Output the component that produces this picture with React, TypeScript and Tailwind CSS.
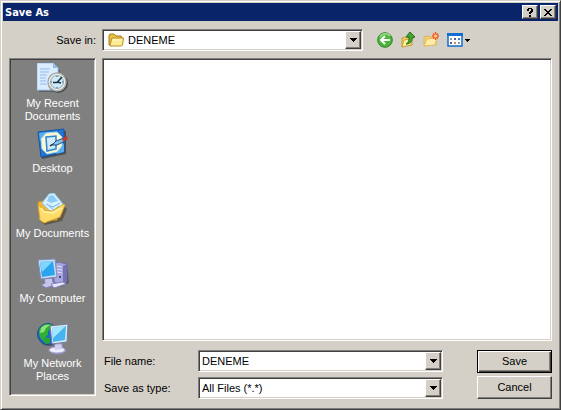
import { useState } from "react";
import type { ReactNode } from "react";

const sunken =
  "border border-t-[#808080] border-l-[#808080] border-r-white border-b-white shadow-[inset_1px_1px_0_#404040,inset_-1px_-1px_0_#d4d0c8]";
const raised =
  "border border-t-white border-l-white border-r-[#404040] border-b-[#404040] bg-[#d4d0c8] shadow-[inset_-1px_-1px_0_#808080]";

const RecentIcon = () => (
  <svg viewBox="0 0 32 32" className="h-8 w-8" aria-hidden="true">
    <path d="M2 2h16l5 5v22H2z" fill="#5b6068" />
    <path d="M0 0h16l5 5v22H0z" fill="#dcecff" stroke="#a9c8f0" />
    <path d="M16 0v5h5z" fill="#8fb8ee" />
    <path d="M3 6h10M3 9h9M3 12h7M3 15h6M3 18h6M3 21h7" stroke="#8db9ee" />
    <circle cx="21" cy="20" r="10" fill="#44484f" />
    <circle cx="20" cy="19" r="9" fill="#eef0ea" stroke="#a9aca8" strokeWidth="1.500" />
    <circle cx="20" cy="19" r="6.500" fill="#cfe9f7" stroke="#8aa3b5" />
    <path d="M20 13v1M20 24v1M14 19h1M25 19h1" stroke="#44647a" />
    <path d="M25 14l-5 5.500h-4M20 19l4 1" fill="none" stroke="#17303c" strokeWidth="1.500" />
  </svg>
);

const DesktopIcon = () => (
  <svg viewBox="0 0 32 32" className="h-8 w-8" aria-hidden="true">
    <path d="M3 5l26-2 0 23-24 5z" fill="#4a4e57" />
    <path d="M1 4l26-3v23L4 29z" fill="#2477d2" stroke="#1257ab" />
    <path d="M2 5l7-1-6 9zM27 15v9l-8 2z" fill="#58aef0" />
    <path d="M9 5l11-1 5 5v9l-5 6-10 2-5-5-1-10z" fill="#fbf8d4" stroke="#a5d8ee" />
    <path d="M9 9l10-1v13l-9 2z" fill="#cfeafa" stroke="#2d83cd" strokeWidth="1.500" />
    <path d="M15 17l4-4 8-3 1 3-8 4z" fill="#8bc2ea" stroke="#214f84" />
    <path d="M25 11l4-3 2 1-1 3-4 1z" fill="#c5392f" />
    <path d="M13 18l3-2" stroke="#152b4b" strokeWidth="1.500" />
  </svg>
);

const DocumentsIcon = () => (
  <svg viewBox="0 0 32 32" className="h-8 w-8" aria-hidden="true">
    <path d="M3 12l4-1 4 3 16-1 3 3-5 12-17 4-5-4z" fill="#61584a" />
    <path d="M1 9l5-1 2 3 12 1v15L3 27z" fill="#eeb83e" stroke="#c99325" />
    <path d="M5 10l7-9 5-1 9 11-10 10z" fill="#d9f1ff" stroke="#8bc6ea" />
    <path d="M12 3l4-1 5 6-7 2-4-2z" fill="#8ccbf2" />
    <path d="M9 11l7 3 7-4M12 13l5 4 5-4" fill="none" stroke="#74b7e5" />
    <path d="M1 11l5 6 9 1 12-7 1 1-5 12-16 6-4-3z" fill="#ffdc68" stroke="#dba730" />
    <path d="M4 15l3 4 9 1 9-5" fill="none" stroke="#fff2a9" strokeWidth="1.500" />
  </svg>
);

const ComputerIcon = () => (
  <svg viewBox="0 0 32 32" className="h-8 w-8" aria-hidden="true">
    <path d="M19 6l11-1 2 20-8 4-5-2z" fill="#5c5e72" />
    <path d="M17 6l4-2 9 2-1 18-6 3-6-3z" fill="#a6a5dc" stroke="#7673b0" />
    <path d="M26 8l4-2v17l-4 3z" fill="#7371b3" />
    <path d="M20 8l5 1M20 11l5 1M20 14l5 1" stroke="#e2e2ff" />
    <path d="M22 19h2" stroke="#48468f" strokeWidth="2" />
    <path d="M7 21l8-1 1 4 2 3-9 3-5-3 4-2z" fill="#c5c5ea" stroke="#7f7db8" />
    <path d="M1 2l17-1 2 18-16 2z" fill="#cddcf3" stroke="#7b91bc" />
    <path d="M3 4l13-1 2 14-13 2z" fill="#2aa4ee" />
    <path d="M3 4l13-1L5 14z" fill="#7fd6ff" />
    <path d="M14 26l12-2 3 2-12 4z" fill="#e6e6fb" stroke="#8684bb" />
  </svg>
);

const NetworkIcon = () => (
  <svg viewBox="0 0 32 32" className="h-8 w-8" aria-hidden="true">
    <circle cx="12" cy="12" r="11" fill="#53565e" />
    <circle cx="11" cy="11" r="10.500" fill="#1f65cc" stroke="#1b4b98" />
    <path d="M2 7c3-6 9-7 14-5l-2 4-3 2v4l-3 2-1 4-3-2-2-5z" fill="#2fae38" />
    <path d="M4 5c2-3 6-4 9-3L9 5 7 9 3 10z" fill="#8be574" />
    <path d="M8 14l5 1v5l-4 1-3-3z" fill="#24a536" />
    <path d="M18 20h7l1 6-9 1z" fill="#bcbbe0" stroke="#8583b9" />
    <path d="M13 3l18-2-1 18-15 2z" fill="#dce8f4" stroke="#717d98" />
    <path d="M15 5l14-2-1 14-12 2z" fill="#46b4f0" />
    <path d="M15 5l14-2-13 12z" fill="#a3e6ff" />
    <ellipse cx="21" cy="28" rx="8" ry="3.500" fill="#8c8ab8" />
    <ellipse cx="20" cy="27" rx="8" ry="3" fill="#eeeeff" stroke="#a9a8d0" />
    <path d="M18 22h6l1 4-7 1z" fill="#cfcef0" />
  </svg>
);

const FolderIcon = () => (
  <svg viewBox="0 0 16 14" className="h-[14px] w-4" aria-hidden="true">
    <path d="M1 12V3l1-2h4l2 2h5l1 2v7z" fill="#e9c242" stroke="#a27a1c" />
    <path d="M2 12l2-7h11.500l-1 7-1 1H2z" fill="#ffed94" stroke="#b88e29" />
    <path d="M5 7h8" stroke="#fff9cd" />
  </svg>
);

const BackIcon = () => (
  <svg viewBox="0 0 16 16" className="h-4 w-4" aria-hidden="true">
    <circle cx="8" cy="8" r="7.300" fill="#4cb53a" stroke="#2b8423" />
    <path d="M3 5c2-4 8-4 10-1" fill="none" stroke="#92d67e" strokeWidth="2" />
    <path d="M13 8H4M8 4L4 8l4 4" fill="none" stroke="white" strokeWidth="2" />
  </svg>
);

const UpIcon = () => (
  <svg viewBox="0 0 16 16" className="h-4 w-4" aria-hidden="true">
    <path d="M2 6l4-1 1 1 5-1v8l-10 2z" fill="#f2d364" stroke="#c29a2f" />
    <path d="M2 15l2-7 9-2-2 7z" fill="#fff0a0" stroke="#cda53a" />
    <path d="M6 12c3-2 3-4 3-7H6l4-5 5 5-3 1c0 4-2 6-6 6z" fill="#42a632" stroke="#236f20" />
  </svg>
);

const NewFolderIcon = () => (
  <svg viewBox="0 0 16 16" className="h-4 w-4" aria-hidden="true">
    <path d="M1 14V5l4-1 2 1h6v8z" fill="#f4cf74" stroke="#dcb45a" />
    <path d="M1 14l3-7 10-1-2 7z" fill="#ffeda5" stroke="#e3bd63" />
    <path d="M12.500 0v8M9 4h7M10 1.500l5 5M15 1.500l-5 5" stroke="#f05d2d" strokeWidth="1.500" />
    <circle cx="12.500" cy="4" r="1.500" fill="#ffd092" />
  </svg>
);

const ViewIcon = () => (
  <svg viewBox="0 0 16 14" className="h-[14px] w-4" aria-hidden="true">
    <path d="M1 1h14v12H1z" fill="white" stroke="#126dcc" strokeWidth="1.500" />
    <path d="M0 0h16v3H0z" fill="#146ed1" />
    <path d="M3 5h2v2H3zM11 9h2v2h-2z" fill="#8c9dab" />
    <path d="M7 5h2v2H7zM3 9h2v2H3z" fill="#555f9a" />
    <path d="M11 5h2v2h-2z" fill="#3585d3" />
    <path d="M7 9h2v2H7z" fill="#db8054" />
  </svg>
);

const Arrow = () => (
  <svg viewBox="0 0 7 4" className="h-1 w-[7px]" shapeRendering="crispEdges" aria-hidden="true">
    <path d="M0 0h7L3.500 4z" fill="black" />
  </svg>
);

const ArrowBox = () => (
  <span
    className={`pointer-events-none absolute inset-y-0.5 right-0.5 flex w-4 items-center justify-center ${raised}`}
  >
    <Arrow />
  </span>
);

const places: { label: string; icon: ReactNode }[] = [
  { label: "My Recent Documents", icon: <RecentIcon /> },
  { label: "Desktop", icon: <DesktopIcon /> },
  { label: "My Documents", icon: <DocumentsIcon /> },
  { label: "My Computer", icon: <ComputerIcon /> },
  { label: "My Network Places", icon: <NetworkIcon /> },
];

const tools = [
  { label: "Back", icon: <BackIcon /> },
  { label: "Up one level", icon: <UpIcon /> },
  { label: "Create new folder", icon: <NewFolderIcon /> },
];

const App = () => {
  const [fileName, setFileName] = useState("DENEME");

  return (
    <main className="flex min-h-screen flex-col border border-t-[#d4d0c8] border-r-[#404040] border-b-[#404040] border-l-[#d4d0c8] bg-[#d4d0c8] p-0.5 font-['Liberation_Sans',Arial,sans-serif] text-[11px] leading-[13px] text-black shadow-[inset_1px_1px_0_white,inset_-1px_-1px_0_#808080]">
      <header className="flex h-[18px] items-center bg-[#0a246a] px-0.5">
        <h1 className="flex-1 font-['DejaVu_Sans_Condensed','DejaVu_Sans',sans-serif] font-bold text-white">
          Save As
        </h1>
        <div className="flex gap-0.5">
          <button
            aria-label="Help"
            className={`flex h-3.5 w-4 items-center justify-center ${raised}`}
          >
            <svg viewBox="0 0 6 9" className="h-[9px] w-1.5" shapeRendering="crispEdges" aria-hidden="true">
              <path d="M1 0h4v1h1v3H5v1H4v1H2V4h1V3h1V1H2v2H0V1h1zM2 7h2v2H2z" />
            </svg>
          </button>
          <button
            aria-label="Close"
            className={`flex h-3.5 w-4 items-center justify-center ${raised}`}
          >
            <svg viewBox="0 0 8 7" className="h-[7px] w-2" shapeRendering="crispEdges" aria-hidden="true">
              <path d="M0 0h2v1h1v1h2V1h1V0h2v1H7v1H6v1H5v1h1v1h1v1h1v1H6V6H5V5H3v1H2v1H0V6h1V5h1V4h1V3H2V2H1V1H0z" />
            </svg>
          </button>
        </div>
      </header>

      <div className="flex flex-1 flex-col px-1.5 pt-2 pb-2">
        <div className="flex items-center">
          <label htmlFor="save-in" className="w-[93px] shrink-0 pr-1.5 text-right">
            Save in:
          </label>
          <div className="flex flex-1 items-center">
            <div className="relative w-[58%]">
              <select
                id="save-in"
                className={`block h-[22px] w-full appearance-none bg-white pr-5 pl-[25px] ${sunken}`}
              >
                <option>DENEME</option>
              </select>
              <span className="pointer-events-none absolute inset-y-0 left-1.5 flex items-center">
                <FolderIcon />
              </span>
              <ArrowBox />
            </div>
            <div className="ml-3.5 flex items-center gap-[7px]">
              {tools.map((tool) => (
                <button key={tool.label} aria-label={tool.label}>
                  {tool.icon}
                </button>
              ))}
              <button aria-label="View" className="ml-px flex items-center gap-0.5">
                <ViewIcon />
                <svg
                  viewBox="0 0 5 3"
                  className="h-[3px] w-[5px]"
                  shapeRendering="crispEdges"
                  aria-hidden="true"
                >
                  <path d="M0 0h5L2.500 3z" />
                </svg>
              </button>
            </div>
          </div>
        </div>

        <div className="mt-[7px] flex flex-1 gap-1.5">
          <nav className="mb-[3px] w-[87px] shrink-0 border border-t-[#808080] border-r-white border-b-white border-l-[#808080] bg-[#808080] pt-1 shadow-[inset_1px_1px_0_#404040,inset_-1px_-1px_0_#d4d0c8]">
            {places.map((place) => (
              <button
                key={place.label}
                className="flex h-[65px] w-full flex-col items-center gap-0.5 text-white"
              >
                {place.icon}
                <span className="max-w-20">{place.label}</span>
              </button>
            ))}
          </nav>

          <div className="flex flex-1 flex-col">
            <section aria-label="Files" className={`flex-1 bg-white ${sunken}`} />

            <form
              className="mt-[9px] flex gap-[34px]"
              onSubmit={(e) => e.preventDefault()}
            >
              <div className="flex flex-1 flex-col gap-[5px] pl-0.5">
                <div className="flex items-center">
                  <label htmlFor="file-name" className="w-[94px]">
                    File name:
                  </label>
                  <div className="relative flex-1">
                    <input
                      id="file-name"
                      value={fileName}
                      onChange={(e) => setFileName(e.target.value)}
                      className={`block h-[22px] w-full bg-white pr-5 pl-[3px] ${sunken}`}
                    />
                    <ArrowBox />
                  </div>
                </div>
                <div className="flex items-center">
                  <label htmlFor="file-type" className="w-[94px]">
                    Save as type:
                  </label>
                  <div className="relative flex-1">
                    <select
                      id="file-type"
                      className={`block h-[22px] w-full appearance-none bg-white pr-5 pl-[3px] ${sunken}`}
                    >
                      <option>All Files (*.*)</option>
                    </select>
                    <ArrowBox />
                  </div>
                </div>
              </div>
              <div className="flex w-[75px] flex-col gap-[3px]">
                <button
                  type="submit"
                  className="h-[23px] border border-black bg-[#d4d0c8] shadow-[inset_1px_1px_0_white,inset_-1px_-1px_0_#404040,inset_-2px_-2px_0_#808080]"
                >
                  Save
                </button>
                <button type="button" className={`h-[23px] ${raised}`}>
                  Cancel
                </button>
              </div>
            </form>
          </div>
        </div>
      </div>
    </main>
  );
};

export default App;
